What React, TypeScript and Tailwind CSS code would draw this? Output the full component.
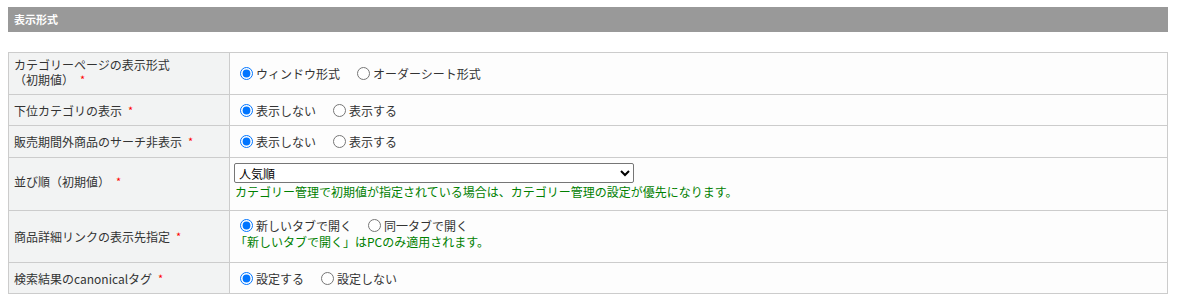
import { useState } from "react";

type Row = {
  label: string[];
  name: string;
  height: string;
  options?: string[];
  gap?: string;
  note?: string;
  select?: boolean;
  labelPad?: string;
};

const rows: Row[] = [
  { label: ["カテゴリーページの表示形式", "（初期値）"], name: "disp", height: "h-[42px]", options: ["ウィンドウ形式", "オーダーシート形式"], labelPad: "pb-[4px]" },
  { label: ["下位カテゴリの表示"], name: "sub", height: "h-[31px]", options: ["表示しない", "表示する"] },
  { label: ["販売期間外商品のサーチ非表示"], name: "outside", height: "h-[32px]", options: ["表示しない", "表示する"] },
  { label: ["並び順（初期値）"], name: "sort", height: "h-[53px]", select: true, labelPad: "pb-[6px]", note: "カテゴリー管理で初期値が指定されている場合は、カテゴリー管理の設定が優先になります。" },
  { label: ["商品詳細リンクの表示先指定"], name: "link", height: "h-[52px]", options: ["新しいタブで開く", "同一タブで開く"], gap: "mr-[11px]", note: "「新しいタブで開く」はPCのみ適用されます。" },
  { label: ["検索結果のcanonicalタグ"], name: "canon", height: "h-[31px]", options: ["設定する", "設定しない"] },
];

function Required() {
  return <span className="ml-[6px] text-[11px] text-[#ff0000] align-top">*</span>;
}

function RadioGroup({ name, options, gap }: { name: string; options: string[]; gap?: string }) {
  const [value, setValue] = useState(options[0]);
  return (
    <div className="flex items-center">
      {options.map((opt) => (
        <label key={opt} className={`flex items-center ${gap ?? "mr-[12px]"}`}>
          <input
            type="radio"
            name={name}
            checked={value === opt}
            onChange={() => setValue(opt)}
            className="m-[0_3px_0_5px] w-[13px] h-[13px] accent-[#0075ff]"
          />
          <span>{opt}</span>
        </label>
      ))}
    </div>
  );
}

export default function App() {
  return (
    <div
      className="w-[1160px] ml-[8px] pt-[7px] text-[12px] text-[#333333] bg-white"
      style={{ fontFamily: '"Noto Sans CJK JP", "Liberation Sans", sans-serif' }}
    >
      {/* Section header */}
      <div className="h-[25px] bg-[#999999] flex items-center pl-[6px]">
        <span className="text-white text-[11px] font-bold">表示形式</span>
      </div>

      <table className="mt-[20px] w-[1160px] border-collapse leading-[15px]">
        <tbody>
          {rows.map((row) => (
            <tr key={row.name} className={row.height}>
              <td className="w-[221px] border border-[#cccccc] bg-[#f2f3f3] px-[5px] align-middle">
                <div className={row.labelPad ?? ""}>
                  {row.label.length > 1 ? (
                    <>
                      <div>{row.label[0]}</div>
                      <div>
                        {row.label[1]}
                        <Required />
                      </div>
                    </>
                  ) : (
                    <div>
                      {row.label[0]}
                      <Required />
                    </div>
                  )}
                </div>
              </td>
              <td className="border border-[#cccccc] bg-[#fdfdfd] px-[5px] align-middle">
                <div className={row.note ? "pb-[6px]" : ""}>
                  {row.select ? (
                    <select className="-ml-[1px] w-[400px] h-[20px] border border-[#767676] rounded-[2px] bg-white pl-0 text-[12px] text-black">
                      <option>人気順</option>
                      <option>新着順</option>
                      <option>価格の安い順</option>
                      <option>価格の高い順</option>
                    </select>
                  ) : (
                    <RadioGroup name={row.name} options={row.options!} gap={row.gap} />
                  )}
                  {row.note && <div className="text-[#008000] mt-[1px]">{row.note}</div>}
                </div>
              </td>
            </tr>
          ))}
        </tbody>
      </table>
    </div>
  );
}
